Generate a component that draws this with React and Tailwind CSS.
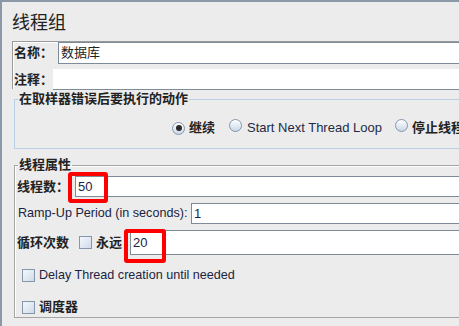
import React from "react";

const FONT = { fontFamily: '"Liberation Sans", "Noto Sans CJK SC", sans-serif' };

function Radio({ checked }) {
  return (
    <span className="relative inline-flex items-center justify-center w-[13px] h-[13px] rounded-full border border-[#8696ab] bg-gradient-to-b from-[#ffffff] to-[#c9d7e8] shrink-0">
      {checked && <span className="w-[6px] h-[6px] rounded-full bg-[#2a2a2a]" />}
    </span>
  );
}

function Check() {
  return (
    <span className="inline-block w-[13px] h-[13px] border border-[#8696ab] bg-gradient-to-br from-[#f4f7fb] to-[#cfdbea] shrink-0" />
  );
}

export default function App() {
  return (
    <div
      className="relative w-[459px] h-[326px] overflow-hidden bg-[#ececec] border-t-2 border-l-2 border-[#8a98a7] text-[13px] text-[#222]"
      style={FONT}
    >
      <div className="w-[600px]">
        <div className="pl-[10px] pt-[9px] h-[33px] text-[18px] leading-[24px] text-[#222]">线程组</div>

        {/* name/comment panel */}
        <div className="ml-[10px] mt-[6px] h-[48px] border-t border-l border-[#9a9a9a] shadow-[inset_1px_1px_0_#ffffff]">
          <div className="flex h-[22px] items-center">
            <div className="w-[45px] pl-[1px] font-semibold leading-[16px]">名称：</div>
            <div className="flex-1 h-[22px] bg-white border-y border-l border-[#7e8b98] pl-[2px] flex items-center leading-[16px]">数据库</div>
          </div>
          <div className="flex h-[23px] items-center mt-[4px]">
            <div className="w-[40px] pl-[1px] font-semibold leading-[16px]">注释：</div>
            <div className="flex-1 h-[21px] bg-white border-b border-[#7e8b98]" />
          </div>
        </div>

        {/* on error group */}
        <fieldset className="ml-[12px] mt-[2px] border border-[#b8cfe6] pb-[10px]">
          <legend className="ml-[3px] px-[1px] font-semibold leading-[16px]">在取样器错误后要执行的动作</legend>
          <div className="flex items-center h-[20px] pl-[157px] mt-[11px]">
            <Radio checked />
            <span className="ml-[4px] font-semibold">继续</span>
            <span className="ml-[14px]"><Radio /></span>
            <span className="ml-[5px] font-medium text-[#1f2a44]">Start Next Thread Loop</span>
            <span className="ml-[13px]"><Radio /></span>
            <span className="ml-[4px] font-semibold">停止线程</span>
          </div>
        </fieldset>

        {/* thread props group */}
        <fieldset className="ml-[12px] mt-[8px] h-[161px] border border-[#a5a5a5] shadow-[inset_1px_1px_0_#ffffff]">
          <legend className="ml-[3px] px-[1px] font-semibold leading-[16px]">线程属性</legend>
          <div className="flex items-center mt-[3px] pl-[2px]">
            <div className="w-[58px] font-semibold">线程数：</div>
            <div className="relative flex-1 h-[21px] bg-white border border-[#7e8b98] pl-[2px] flex items-center text-[#1a2440]">
              50
              <span className="absolute left-[-8px] top-[-5px] w-[40px] h-[31px] border-4 border-[#ff0000] rounded-[3px]" />
            </div>
          </div>
          <div className="flex items-center mt-[6px] pl-[3px]">
            <div className="w-[173px] whitespace-nowrap text-[12.6px] text-[#1a2440]">Ramp-Up Period (in seconds):</div>
            <div className="flex-1 h-[21px] bg-white border border-[#7e8b98] pl-[2px] flex items-center text-[#1a2440]">1</div>
          </div>
          <div className="flex items-center mt-[6px] pl-[2px]">
            <div className="w-[62px] font-semibold">循环次数</div>
            <Check />
            <span className="ml-[4px] font-semibold w-[34px]">永远</span>
            <div className="relative flex-1 h-[25px] bg-white border border-[#7e8b98] pl-[2px] flex items-center text-[#1a2440]">
              20
              <span className="absolute left-[-7px] top-[-2px] w-[42px] h-[34px] border-4 border-[#ff0000] rounded-[3px]" />
            </div>
          </div>
          <div className="flex items-center mt-[13px] pl-[7px] h-[14px]">
            <Check />
            <span className="ml-[4px] text-[12.6px] text-[#1a2440]">Delay Thread creation until needed</span>
          </div>
          <div className="flex items-center mt-[18px] pl-[7px] h-[14px]">
            <Check />
            <span className="ml-[4px] font-semibold">调度器</span>
          </div>
        </fieldset>
      </div>
    </div>
  );
}
